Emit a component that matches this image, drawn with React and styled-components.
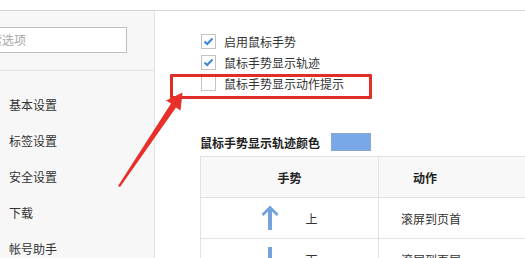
import React from "react";
import styled, { createGlobalStyle } from "styled-components";

const GlobalStyle = createGlobalStyle`
  body {
    margin: 0;
    background: #fff;
    font-family: "Noto Sans CJK SC", "Noto Sans", sans-serif;
    font-size: 12px;
    color: #333;
  }
`;

const Window = styled.div`
  position: relative;
  width: 525px;
  height: 258px;
  overflow: hidden;
  display: flex;
  flex-direction: column;
`;

const TopBar = styled.div`
  height: 10px;
  flex-shrink: 0;
  background: #fff;
  border-bottom: 1px solid #d6d6d6;
  box-shadow: 0 3px 3px rgba(0, 0, 0, 0.03);
`;

const Body = styled.div`
  flex: 1;
  display: flex;
  min-height: 0;
`;

const Sidebar = styled.div`
  width: 154px;
  flex-shrink: 0;
  background: #f7f7f7;
  border-right: 1px solid #e3e3e3;
`;

const SearchWrap = styled.div`
  padding: 16px 0 17px;
  border-bottom: 1px solid #e4e4e4;
`;

const Search = styled.div`
  width: 148px;
  height: 24px;
  margin-left: -23px;
  box-sizing: content-box;
  border: 1px solid #bdbdbd;
  background: #fff;
  color: #a8a8a8;
  line-height: 24px;
`;

const Menu = styled.div`
  padding-top: 16px;
`;

const MenuItem = styled.div`
  height: 36px;
  line-height: 36px;
  padding-left: 9px;
  color: #333;
`;

const Main = styled.div`
  flex: 1;
  padding: 20px 0 0 46px;
  background: #fff;
`;

const CheckRow = styled.div`
  height: 21px;
  display: flex;
  align-items: center;
  gap: 8px;
`;

const Box = styled.span`
  width: 13px;
  height: 13px;
  border: 1px solid #c3c3c3;
  background: #fff;
  display: flex;
  align-items: center;
  justify-content: center;
`;

const ColorRow = styled.div`
  margin-top: 39px;
  margin-left: -1px;
  height: 18px;
  display: flex;
  align-items: center;
  gap: 11px;
  font-weight: bold;
  color: #222;
`;

const Swatch = styled.span`
  width: 38px;
  height: 16px;
  background: #78a8e8;
  border: 1px solid #8aa8d0;
`;

const Table = styled.div`
  margin-top: 5px;
  margin-left: -1px;
  width: 420px;
  border: 1px solid #e2e2e2;
`;

const Row = styled.div`
  display: grid;
  grid-template-columns: 178px 1fr;
  height: 40px;
  border-bottom: 1px solid #e2e2e2;
  background: ${(p) => (p.$head ? "#f8f8f8" : "#fff")};
  font-weight: ${(p) => (p.$head ? "bold" : "normal")};
  color: ${(p) => (p.$head ? "#222" : "#333")};
`;

const Cell = styled.div`
  display: flex;
  align-items: center;
  justify-content: ${(p) => (p.$center ? "center" : "flex-start")};
  gap: 26px;
  padding-left: ${(p) => p.$pad || 0}px;
  border-right: ${(p) => (p.$first ? "1px solid #e2e2e2" : "none")};
`;

const RedBox = styled.div`
  position: absolute;
  left: 170px;
  top: 74px;
  width: 196px;
  height: 19px;
  border: 3px solid #e02d27;
  border-radius: 1px;
`;

const Pointer = styled.svg`
  position: absolute;
  left: 0;
  top: 0;
  pointer-events: none;
`;

const Check = ({ on }) => (
  <Box>
    {on && (
      <svg width="11" height="9" viewBox="0 0 11 9">
        <polyline points="1.5,4.5 4.2,7 9.5,1.5" fill="none" stroke="#3a86d8" strokeWidth="2" />
      </svg>
    )}
  </Box>
);

const Arrow = ({ down }) => (
  <svg width="18" height="26" viewBox="0 0 18 26" style={{ transform: down ? "rotate(180deg)" : "none" }}>
    <path d="M9 0.5 L17.5 9 L15.5 11 L11 6.5 L11 25 L7 25 L7 6.5 L2.5 11 L0.5 9 Z" fill="#74a3e0" />
  </svg>
);

const checks = [
  { label: "启用鼠标手势", on: true },
  { label: "鼠标手势显示轨迹", on: true },
  { label: "鼠标手势显示动作提示", on: false },
];

const menu = ["基本设置", "标签设置", "安全设置", "下载", "帐号助手"];

const App = () => {
  return (
    <Window>
      <GlobalStyle />
      <TopBar />
      <Body>
        <Sidebar>
          <SearchWrap>
            <Search>搜索选项</Search>
          </SearchWrap>
          <Menu>
            {menu.map((m) => (
              <MenuItem key={m}>{m}</MenuItem>
            ))}
          </Menu>
        </Sidebar>
        <Main>
          {checks.map((c) => (
            <CheckRow key={c.label}>
              <Check on={c.on} />
              <span>{c.label}</span>
            </CheckRow>
          ))}
          <ColorRow>
            <span>鼠标手势显示轨迹颜色</span>
            <Swatch />
          </ColorRow>
          <Table>
            <Row $head>
              <Cell $first $center>手势</Cell>
              <Cell $pad={34}>动作</Cell>
            </Row>
            <Row>
              <Cell $first $center>
                <Arrow />
                <span>上</span>
              </Cell>
              <Cell $pad={22}>滚屏到页首</Cell>
            </Row>
            <Row>
              <Cell $first $center>
                <Arrow down />
                <span>下</span>
              </Cell>
              <Cell $pad={22}>滚屏到页尾</Cell>
            </Row>
          </Table>
        </Main>
      </Body>
      <RedBox />
      <Pointer width="525" height="258" viewBox="0 0 525 258">
        <polygon
          points="118,186 171,103.6 166,100.4 182.5,92.5 180.5,110.5 176,107.4 120,187"
          fill="#e8302a"
        />
      </Pointer>
    </Window>
  );
};

export default App;
